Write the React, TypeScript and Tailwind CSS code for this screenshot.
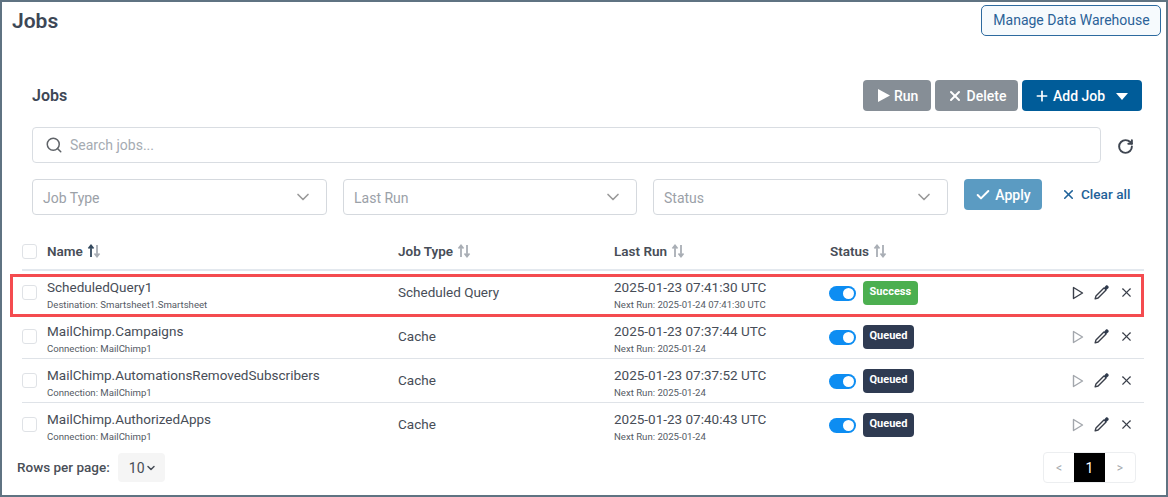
import { Check, ChevronDown, Plus, RotateCw, Search, X } from "lucide-react";

const rows = [
  { name: "ScheduledQuery1", sub: "Destination: Smartsheet1.Smartsheet", type: "Scheduled Query", last: "2025-01-23 07:41:30 UTC", next: "Next Run: 2025-01-24 07:41:30 UTC", status: "Success" },
  { name: "MailChimp.Campaigns", sub: "Connection: MailChimp1", type: "Cache", last: "2025-01-23 07:37:44 UTC", next: "Next Run: 2025-01-24", status: "Queued" },
  { name: "MailChimp.AutomationsRemovedSubscribers", sub: "Connection: MailChimp1", type: "Cache", last: "2025-01-23 07:37:52 UTC", next: "Next Run: 2025-01-24", status: "Queued" },
  { name: "MailChimp.AuthorizedApps", sub: "Connection: MailChimp1", type: "Cache", last: "2025-01-23 07:40:43 UTC", next: "Next Run: 2025-01-24", status: "Queued" },
];

function SortIcon({ active }: { active?: boolean }) {
  return (
    <svg width="14" height="14" viewBox="0 0 14 14" fill="none" strokeWidth="1.8">
      <path d="M4 13V2M1.5 4.5 4 1.5l2.5 3" stroke={active ? "#34495e" : "#a9aeb5"} />
      <path d="M10 1v11M7.5 9.5l2.5 3 2.5-3" stroke="#a9aeb5" />
    </svg>
  );
}

function PenIcon() {
  return (
    <svg width="17" height="17" viewBox="0 0 16 16" fill="none">
      <path d="M10.5 3.5 2.8 11.2 2 14l2.8-.8 7.7-7.7" stroke="#3a3f4a" strokeWidth="1.3" strokeLinejoin="round" />
      <path d="M10 4l2-2.4c.6-.5 1.3-.5 1.9 0l.5.5c.5.6.5 1.3 0 1.9L12 6.2z" fill="#2f3a4c" />
    </svg>
  );
}

function PlayOutline({ dark }: { dark: boolean }) {
  return (
    <svg width="12" height="14" viewBox="0 0 12 14" fill="none">
      <path d="M1.5 1.5v11l9-5.5z" stroke={dark ? "#3a3f4a" : "#a3a7ad"} strokeWidth="1.4" strokeLinejoin="round" />
    </svg>
  );
}

function Filter({ label, w }: { label: string; w: string }) {
  return (
    <div className={`${w} h-9 flex items-center justify-between pl-[10px] pr-[13px] border border-[#d5d9de] rounded text-sm text-[#9ba1a8]`}>
      <span className="pt-0.5">{label}</span>
      <ChevronDown size={20} className="text-[#9a9a9a]" />
    </div>
  );
}

function Checkbox() {
  return <div className="w-[15px] h-[15px] border border-[#dfe2e6] rounded-[3px] bg-white shrink-0" />;
}

const cols = "grid grid-cols-[25px_351px_216px_216px_1fr] items-center";

export default function App() {
  return (
    <div className="relative w-[1168px] h-[497px] border-2 border-[#5f7382] bg-white overflow-hidden text-[#474d57] font-['Roboto',sans-serif]">
      {/* page header */}
      <div className="flex justify-between pl-[10px] pr-[5px] pt-[3px] h-[78px]">
        <h1 className="text-[21px] font-semibold leading-[32px] text-[#3d4756]">Jobs</h1>
        <button className="w-[180px] h-[31px] pb-px pl-px border border-[#2d6a9f] rounded-[5px] bg-[#f6fafd] text-sm text-[#2b6298]">
          Manage Data Warehouse
        </button>
      </div>

      {/* toolbar */}
      <div className="flex items-center justify-between pl-[30px] pr-6 h-[31px]">
        <h2 className="text-base font-semibold text-[#3d4756]">Jobs</h2>
        <div className="flex gap-1 text-sm font-medium text-white">
          <button className="w-[68px] h-[31px] flex items-center pl-[15px] gap-1 rounded bg-[#868e96]">
            <svg width="12" height="13" viewBox="0 0 12 13"><path d="M0 0l12 6.5L0 13z" fill="white" /></svg> Run
          </button>
          <button className="w-[83px] h-[31px] flex items-center justify-center gap-1 rounded bg-[#868e96]">
            <X size={16} strokeWidth={3} /> Delete
          </button>
          <button className="w-[120px] h-[31px] flex items-center pl-[12px] gap-[3px] rounded bg-[#005c99]">
            <Plus size={16} strokeWidth={2.5} /> Add Job
            <svg width="12" height="7" viewBox="0 0 12 7" className="ml-[8px] mt-0.5"><path d="M0 0h12L6 7z" fill="white" /></svg>
          </button>
        </div>
      </div>

      {/* search */}
      <div className="flex items-center pl-[30px] mt-4">
        <div className="w-[1069px] h-9 flex items-center gap-[7px] pl-3 border border-[#d9dde2] rounded text-sm text-[#a5abb2]">
          <Search size={18} className="text-[#5f6368]" />
          <span>Search jobs...</span>
        </div>
        <RotateCw size={17} strokeWidth={2.75} className="ml-4 mt-0.5 text-[#3f4651]" />
      </div>

      {/* filters */}
      <div className="flex items-start pl-[30px] mt-4">
        <Filter label="Job Type" w="w-[295px]" />
        <div className="ml-4"><Filter label="Last Run" w="w-[294px]" /></div>
        <div className="ml-4"><Filter label="Status" w="w-[295px]" /></div>
        <button className="ml-4 w-[78px] h-[31px] flex items-center justify-center gap-1 rounded bg-[#5b9bc2] text-sm font-medium text-white">
          <Check size={16} strokeWidth={3} /> Apply
        </button>
        <button className="ml-5 h-[30px] flex items-center gap-[5px] text-[13.6px] font-medium text-[#1f6299]">
          <X size={15} strokeWidth={2.5} className="-ml-px" /> Clear all
        </button>
      </div>

      {/* table */}
      <div className="ml-5 w-[1122px] mt-[18px] text-[13.5px]">
        <div className={`${cols} h-[38px] border-b-2 border-[#e3e8ee] font-semibold`}>
          <Checkbox />
          <div className="flex items-center gap-1">Name <SortIcon active /></div>
          <div className="flex items-center gap-1">Job Type <SortIcon /></div>
          <div className="flex items-center gap-1">Last Run <SortIcon /></div>
          <div className="flex items-center gap-1">Status <SortIcon /></div>
        </div>
        {rows.map((r) => (
          <div key={r.name} className={`${cols} h-[44px] border-b border-[#dfe3e8] last:border-transparent`}>
            <Checkbox />
            <div className="pt-1">
              <div className="leading-[20px]">{r.name}</div>
              <div className="text-[9.6px] leading-[15px] text-[#555b65]">{r.sub}</div>
            </div>
            <div>{r.type}</div>
            <div className="pt-1">
              <div className="leading-[20px]">{r.last}</div>
              <div className="text-[9.6px] leading-[15px] text-[#555b65]">{r.next}</div>
            </div>
            <div className="flex items-center -ml-px">
              <div className="w-[27px] h-[15px] rounded-full bg-[#0d8df2] flex items-center justify-end pr-0.5 mt-0.5">
                <div className="w-[11px] h-[11px] rounded-full bg-white" />
              </div>
              <div className={`ml-[7px] h-6 px-[6.5px] flex items-center rounded text-[11px] font-bold text-white ${r.status === "Success" ? "bg-[#4caf50]" : "bg-[#2f3b52]"}`}>
                {r.status}
              </div>
              <div className="ml-auto mr-[10px] flex items-center gap-[9px]">
                <PlayOutline dark={r.status === "Success"} />
                <PenIcon />
                <X size={15} strokeWidth={1.8} className="text-[#3a3f4a]" />
              </div>
            </div>
          </div>
        ))}
      </div>

      {/* footer */}
      <div className="flex items-center justify-between pl-[15px] pr-[30px] mt-[5px]">
        <div className="flex items-center">
          <span className="text-[13.5px] font-medium text-[#4a4f58]">Rows per page:</span>
          <div className="ml-2 w-[47px] h-[29px] pl-[3px] rounded bg-[#f5f5f5] flex items-center justify-center text-sm">
            10<ChevronDown size={12} strokeWidth={3} />
          </div>
        </div>
        <div className="flex w-[93px] h-[31px] border border-[#eceef0] rounded text-xs text-[#a5a9ae]">
          <span className="w-[31px] flex items-center justify-center">&lt;</span>
          <span className="w-[31px] flex items-center justify-center bg-black text-sm text-white">1</span>
          <span className="w-[31px] flex items-center justify-center">&gt;</span>
        </div>
      </div>

      {/* red highlight annotation */}
      <div className="absolute left-[8px] top-[272px] w-[1134px] h-[43px] border-[3px] border-[#f44b4f] pointer-events-none" />
    </div>
  );
}
